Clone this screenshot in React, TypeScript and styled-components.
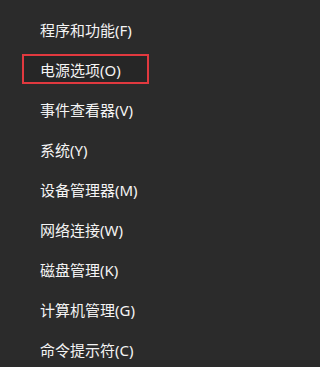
import React from 'react'
import styled, { createGlobalStyle } from 'styled-components'

const GlobalStyle = createGlobalStyle`
  html, body {
    margin: 0;
    padding: 0;
    background: #2b2b2b;
  }
`

const items = [
  { label: '程序和功能(F)' },
  { label: '电源选项(O)', marked: true },
  { label: '事件查看器(V)' },
  { label: '系统(Y)' },
  { label: '设备管理器(M)' },
  { label: '网络连接(W)' },
  { label: '磁盘管理(K)' },
  { label: '计算机管理(G)' },
  { label: '命令提示符(C)' },
]

export default function App() {
  return (
    <>
      <GlobalStyle />
      <Menu>
        {items.map((item) => (
          <Item key={item.label}>
            <Label $marked={!!item.marked}>{item.label}</Label>
          </Item>
        ))}
      </Menu>
    </>
  )
}

const Menu = styled.ul`
  display: flex;
  flex-direction: column;
  width: 284px;
  height: 367px;
  margin: 0;
  padding: 9px 0 0 0;
  box-sizing: border-box;
  list-style: none;
  background: #2b2b2b;
  overflow: hidden;
`

const Item = styled.li`
  display: flex;
  align-items: center;
  height: 40px;
  padding-left: 22px;
  flex-shrink: 0;
`

const Label = styled.span<{ $marked: boolean }>`
  display: flex;
  align-items: center;
  box-sizing: border-box;
  width: 127px;
  height: 30px;
  padding-left: 16px;
  border: 2px solid ${(p) => (p.$marked ? '#e1393f' : 'transparent')};
  background: ${(p) => (p.$marked ? '#262626' : 'transparent')};
  color: #f4f4f4;
  font-family: 'Noto Sans', 'Noto Sans CJK SC', sans-serif;
  font-size: 15px;
  white-space: nowrap;
`
